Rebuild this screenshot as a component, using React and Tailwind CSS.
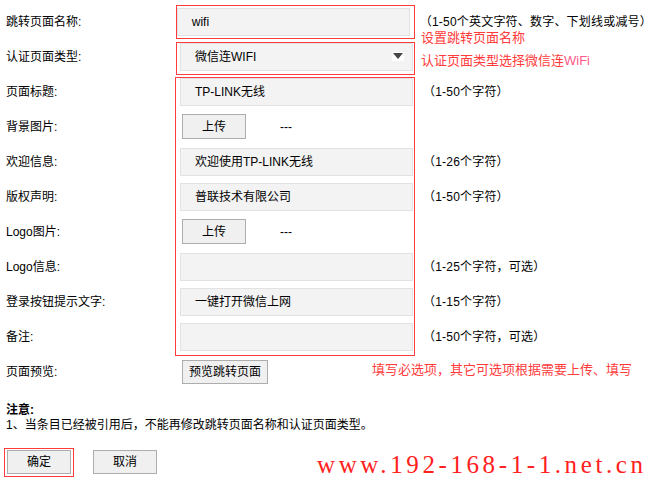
import React from "react";

const font = { fontFamily: '"Liberation Sans", "Noto Sans CJK SC", sans-serif' };

function Field({ children }) {
  return (
    <div className="h-[28px] w-[233px] border border-[#e2e2e2] bg-[#f3f3f3] pl-[14px] flex items-center text-[12px] text-black">
      {children}
    </div>
  );
}

function Btn({ children, w = "w-[64px]", h = "h-[25px]" }) {
  return (
    <div className={`${w} ${h} border border-[#adadad] bg-[#f0f0f0] flex items-center justify-center text-[12px] text-black`}>
      {children}
    </div>
  );
}

function Row({ label, children, hint }) {
  return (
    <div className="h-[35px] flex items-center">
      <div className="w-[174px] text-[12px] text-black">{label}</div>
      <div className="w-[233px] flex items-center">{children}</div>
      {hint && <div className="ml-[10px] text-[12px] text-black whitespace-nowrap tracking-[0.2px]">{hint}</div>}
    </div>
  );
}

function Upload() {
  return (
    <div className="flex items-center pl-[2px]">
      <Btn>上传</Btn>
      <span className="ml-[34px] text-[12px] text-black">---</span>
    </div>
  );
}

export default function App() {
  return (
    <div className="relative w-[652px] h-[481px] bg-white overflow-hidden" style={font}>
      <div className="pl-[6px] pt-[4px]">
        <Row label="跳转页面名称:" hint="（1-50个英文字符、数字、下划线或减号）">
          <Field>wifi</Field>
        </Row>
        <Row label="认证页面类型:">
          <div className="relative">
            <Field>微信连WIFI</Field>
            <div className="absolute right-[9px] top-[9px] w-[12px] h-[9px] bg-white flex items-center justify-center">
              <svg width="10" height="6" viewBox="0 0 10 6">
                <path d="M0 0 H10 L5 6 Z" fill="#444" />
              </svg>
            </div>
          </div>
        </Row>
        <Row label="页面标题:" hint="（1-50个字符）">
          <Field>TP-LINK无线</Field>
        </Row>
        <Row label="背景图片:">
          <Upload />
        </Row>
        <Row label="欢迎信息:" hint="（1-26个字符）">
          <Field>欢迎使用TP-LINK无线</Field>
        </Row>
        <Row label="版权声明:" hint="（1-50个字符）">
          <Field>普联技术有限公司</Field>
        </Row>
        <Row label="Logo图片:">
          <Upload />
        </Row>
        <Row label="Logo信息:" hint="（1-25个字符，可选）">
          <Field></Field>
        </Row>
        <Row label="登录按钮提示文字:" hint="（1-15个字符）">
          <Field>一键打开微信上网</Field>
        </Row>
        <Row label="备注:" hint="（1-50个字符，可选）">
          <Field></Field>
        </Row>
        <Row label="页面预览:">
          <div className="pl-[2px]">
            <Btn w="w-[86px]" h="h-[24px]">预览跳转页面</Btn>
          </div>
        </Row>

        <div className="mt-[14px] text-[12px] leading-[15px] text-black font-bold">注意:</div>
        <div className="text-[12px] leading-[15px] text-black">1、当条目已经被引用后，不能再修改跳转页面名称和认证页面类型。</div>

        <div className="mt-[17px] flex items-center gap-[22px] pl-[1px]">
          <div className="relative">
            <Btn w="w-[64px]" h="h-[24px]">确定</Btn>
            <div className="absolute -left-[3px] -top-[2px] w-[70px] h-[29px] border border-[#ff3b3b]"></div>
          </div>
          <Btn w="w-[64px]" h="h-[24px]">取消</Btn>
        </div>
      </div>

      {/* annotation boxes */}
      <div className="absolute left-[176px] top-[5px] w-[239px] h-[34px] border border-[#ff3b3b]"></div>
      <div className="absolute left-[176px] top-[42px] w-[239px] h-[33px] border border-[#ff3b3b]"></div>
      <div className="absolute left-[175px] top-[77px] w-[240px] h-[279px] border border-[#ff3b3b]"></div>

      {/* annotation texts */}
      <div className="absolute left-[421px] top-[30px] text-[13px] leading-[16px] text-[#ff3b3b] whitespace-nowrap">设置跳转页面名称</div>
      <div className="absolute left-[421px] top-[53px] text-[13px] leading-[16px] text-[#ff3b3b] whitespace-nowrap">
        认证页面类型选择微信连<span className="text-[#ff5a8a]">WiFi</span>
      </div>
      <div className="absolute left-[372px] top-[362px] text-[13px] leading-[16px] text-[#ff3b3b] whitespace-nowrap">填写必选项，其它可选项根据需要上传、填写</div>

      {/* watermark */}
      <div
        className="absolute left-[317px] top-[450px] text-[25px] leading-[30px] text-[#ff2020] whitespace-nowrap tracking-[3.6px]"
        style={{ fontFamily: '"Liberation Serif", serif' }}
      >
        www.192-168-1-1.net.cn
      </div>
    </div>
  );
}
